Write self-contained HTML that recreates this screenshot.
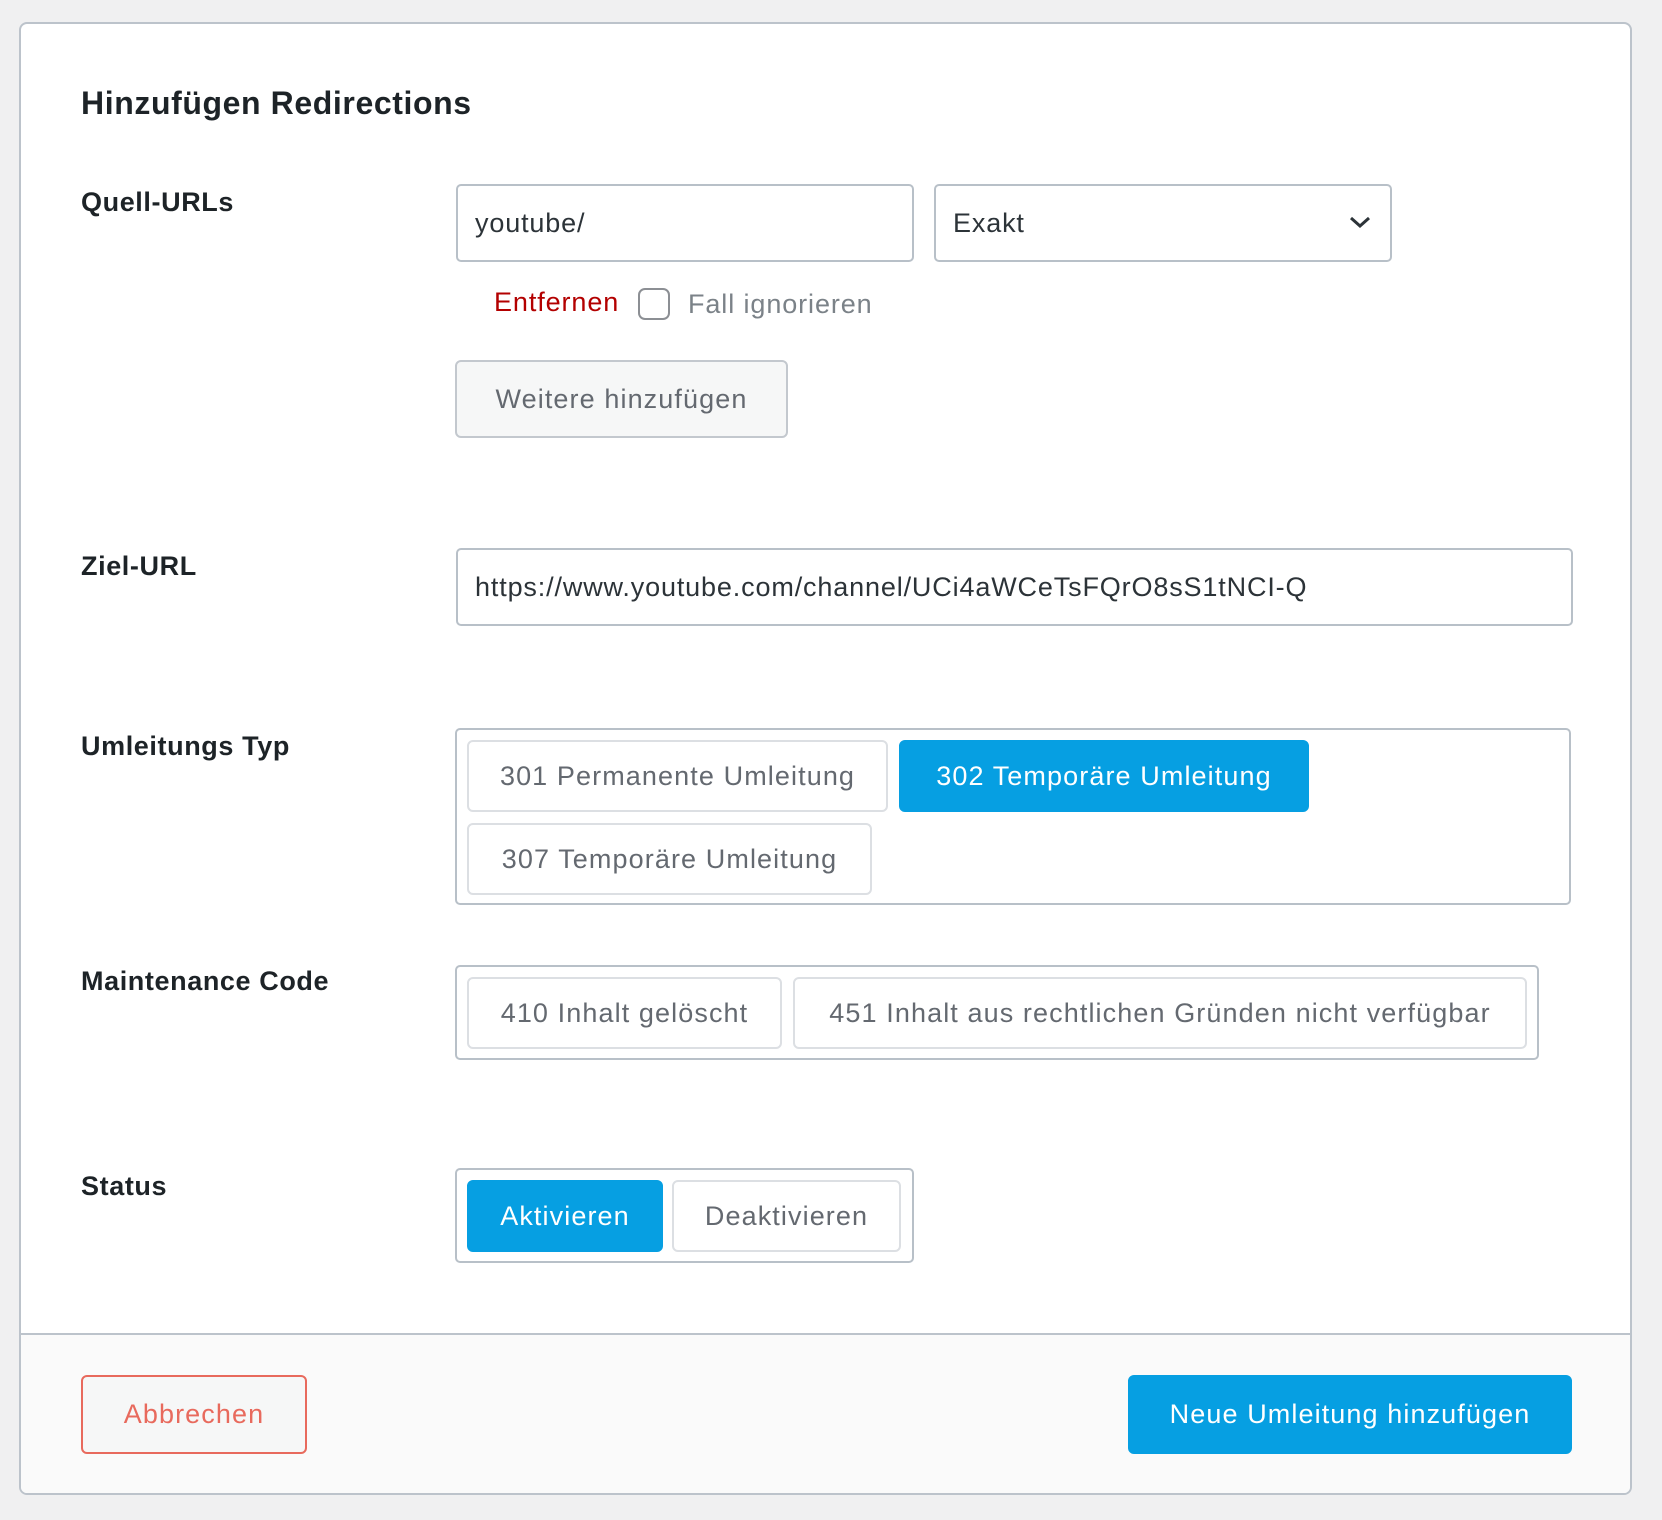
<!DOCTYPE html>
<html><head><meta charset="utf-8"><style>
*{box-sizing:border-box;margin:0;padding:0}
body{width:1662px;height:1520px;background:#f0f0f1;font-family:"Liberation Sans",sans-serif;position:relative;overflow:hidden}
.card{position:absolute;left:19px;top:22px;width:1613px;height:1473px;background:#fff;border:2px solid #bcc3cb;border-radius:8px;overflow:hidden}
.abs{position:absolute}
.w{position:absolute;left:-2px;top:-2px;width:100%;height:100%}
.lbl{position:absolute;left:62px;font-size:27px;font-weight:bold;color:#1d2327;line-height:1;letter-spacing:0.6px}
.inp{position:absolute;border:2px solid #b8c0c8;border-radius:5px;background:#fff;font-size:27px;color:#2c3338;display:flex;align-items:center;padding-left:17px;letter-spacing:0.85px}
.grp{position:absolute;border:2px solid #b8c0c8;border-radius:5px;background:#fff}
.b{position:absolute;border:2px solid #dcdfe3;border-radius:6px;background:#fff;color:#646970;font-size:27px;display:flex;align-items:center;justify-content:center;white-space:nowrap;letter-spacing:1.1px}
.on{background:#069fe2;border-color:#069fe2;color:#fff}
</style></head><body>
<div class="card">
  <div class="abs" style="left:0;top:1309px;width:100%;height:170px;background:#fafafa;border-top:2px solid #bcc3cb"></div>
  <div class="w">
  <div class="abs" style="left:62px;top:63px;font-size:32px;font-weight:bold;color:#1d2327;letter-spacing:0.6px">Hinzufügen Redirections</div>

  <div class="lbl" style="top:167px">Quell-URLs</div>
  <div class="inp" style="left:437px;top:162px;width:458px;height:78px">youtube/</div>
  <div class="inp" style="left:915px;top:162px;width:458px;height:78px">Exakt
    <svg class="abs" style="right:18px;top:28px" width="24" height="16" viewBox="0 0 24 16"><path d="M3 4l9 8 9-8" fill="none" stroke="#2c3338" stroke-width="3"/></svg>
  </div>
  <div class="abs" style="left:475px;top:265px;font-size:27px;color:#b30000;letter-spacing:0.9px">Entfernen</div>
  <div class="abs" style="left:619px;top:266px;width:32px;height:32px;border:2px solid #8c8f94;border-radius:7px"></div>
  <div class="abs" style="left:669px;top:267px;font-size:27px;color:#7b8288;letter-spacing:0.9px">Fall ignorieren</div>
  <div class="b" style="left:436px;top:338px;width:333px;height:78px;background:#f6f7f7;border-color:#c3c8ce">Weitere hinzufügen</div>

  <div class="lbl" style="top:531px">Ziel-URL</div>
  <div class="inp" style="left:437px;top:526px;width:1117px;height:78px">https://www.youtube.com/channel/UCi4aWCeTsFQrO8sS1tNCI-Q</div>

  <div class="lbl" style="top:711px">Umleitungs Typ</div>
  <div class="grp" style="left:436px;top:706px;width:1116px;height:177px">
    <div class="b" style="left:10px;top:10px;width:421px;height:72px">301 Permanente Umleitung</div>
    <div class="b on" style="left:442px;top:10px;width:410px;height:72px">302 Temporäre Umleitung</div>
    <div class="b" style="left:10px;top:93px;width:405px;height:72px">307 Temporäre Umleitung</div>
  </div>

  <div class="lbl" style="top:946px">Maintenance Code</div>
  <div class="grp" style="left:436px;top:943px;width:1084px;height:95px">
    <div class="b" style="left:10px;top:10px;width:315px;height:72px">410 Inhalt gelöscht</div>
    <div class="b" style="left:336px;top:10px;width:734px;height:72px">451 Inhalt aus rechtlichen Gründen nicht verfügbar</div>
  </div>

  <div class="lbl" style="top:1151px">Status</div>
  <div class="grp" style="left:436px;top:1146px;width:459px;height:95px">
    <div class="b on" style="left:10px;top:10px;width:196px;height:72px">Aktivieren</div>
    <div class="b" style="left:215px;top:10px;width:229px;height:72px">Deaktivieren</div>
  </div>

  <div class="b" style="left:62px;top:1353px;width:226px;height:79px;background:#f6f7f7;border-color:#e86a5d;color:#e86a5d">Abbrechen</div>
  <div class="b on" style="left:1109px;top:1353px;width:444px;height:79px">Neue Umleitung hinzufügen</div>
  </div>
</div>
</body></html>
